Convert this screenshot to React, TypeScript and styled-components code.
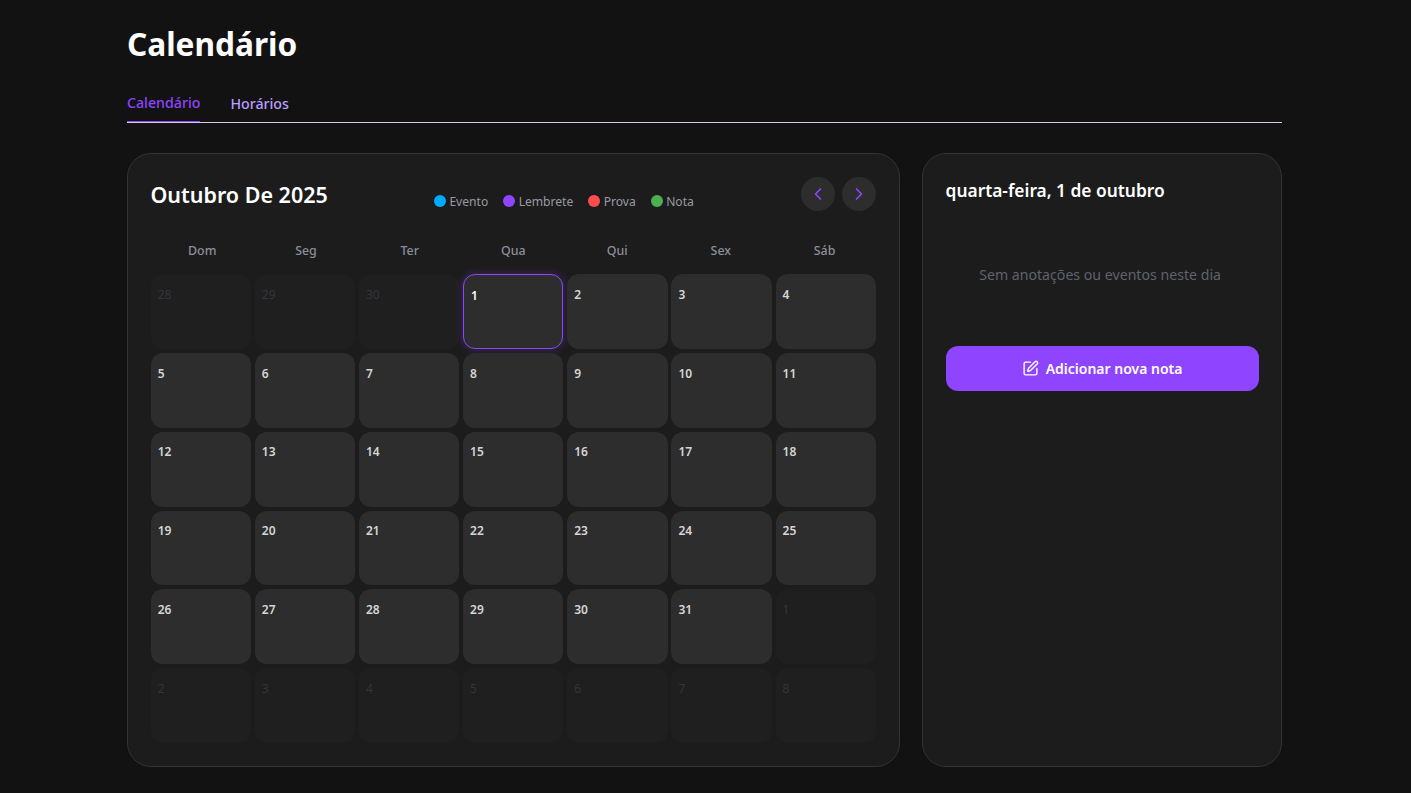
import React from 'react';
import styled, { createGlobalStyle } from 'styled-components';
import { ChevronLeft, ChevronRight, SquarePen } from 'lucide-react';

const Global = createGlobalStyle`
  * { box-sizing: border-box; }
  html, body { margin: 0; background: #121212; height: 100%; }
  body { font-family: "Noto Sans", "Open Sans", sans-serif; overflow: hidden; }
`;

const Page = styled.div`
  width: 1155px;
  margin-left: 127px;
  height: 793px;
  display: flex;
  flex-direction: column;
`;
const Title = styled.h1`
  margin: 0;
  padding-top: 22px;
  height: 89px;
  font-size: 31.6px;
  line-height: 44px;
  font-weight: 700;
  color: #fff;
`;
const Tabs = styled.div`
  display: flex;
  gap: 30px;
  height: 34px;
  border-bottom: 1px solid #d9c8ff;
`;
const Tab = styled.div<{ $active?: boolean }>`
  height: 33px;
  font-size: 14.2px;
  font-weight: 500;
  line-height: ${p => (p.$active ? '27px' : '30px')};
  color: ${p => (p.$active ? '#8f45ff' : '#bb9eff')};
  border-bottom: ${p => (p.$active ? '1px solid #8f45ff' : 'none')};
`;
const Columns = styled.div`
  display: grid;
  grid-template-columns: 772.8px 359.8px;
  gap: 22.4px;
  margin-top: 30px;
  height: 614px;
`;
const Card = styled.section`
  background: #1c1c1c;
  border: 1px solid #333;
  border-radius: 24px;
  padding: 23px 22.4px;
`;
const CalHeader = styled.div`
  display: flex;
  align-items: flex-start;
  height: 62px;
`;
const Month = styled.h2`
  flex: 0 0 283.6px;
  margin: 0;
  font-size: 21.5px;
  line-height: 36px;
  font-weight: 600;
  color: #fff;
`;
const Legend = styled.div`
  display: flex;
  gap: 15px;
  margin-top: 14px;
  height: 20px;
  align-items: center;
`;
const LegendItem = styled.div`
  display: flex;
  align-items: center;
  gap: 3.4px;
  font-size: 12.1px;
  color: #9a9aa4;
`;
const Dot = styled.span<{ $c: string }>`
  width: 12px;
  height: 12px;
  border-radius: 50%;
  background: ${p => p.$c};
`;
const Nav = styled.div`
  display: flex;
  gap: 7px;
  margin-left: auto;
`;
const NavButton = styled.button`
  width: 34px;
  height: 34px;
  border: 0;
  padding: 0;
  border-radius: 50%;
  background: #2d2d2d;
  color: #8f45ff;
  display: flex;
  align-items: center;
  justify-content: center;
`;
const WeekRow = styled.div`
  display: grid;
  grid-template-columns: repeat(7, 1fr);
  gap: 4px;
  height: 24px;
  margin-bottom: 11px;
  padding: 0 2px;
`;
const WeekDay = styled.div`
  text-align: center;
  font-size: 12.4px;
  font-weight: 500;
  line-height: 18px;
  padding-top: 3px;
  color: #8b8f99;
`;
const Grid = styled.div`
  display: grid;
  width: 725.2px;
  margin-left: 0.25px;
  grid-template-columns: repeat(7, 1fr);
  grid-auto-rows: 74.85px;
  gap: 4px 3.85px;
`;
const Cell = styled.div<{ $muted?: boolean; $selected?: boolean }>`
  border-radius: 12px;
  padding: 10.7px 7px;
  font-size: 12px;
  line-height: 20px;
  font-weight: ${p => (p.$muted ? 400 : 600)};
  color: ${p => (p.$muted ? '#33353b' : p.$selected ? '#fff' : '#d6d6d6')};
  background: ${p => (p.$muted ? '#1f1f1f' : '#2d2d2d')};
  border: ${p => (p.$selected ? '1px solid #8f45ff' : 'none')};
  box-shadow: ${p => (p.$selected ? '0 0 10px rgba(143, 69, 255, 0.3)' : 'none')};
`;
const SideTitle = styled.h3`
  margin: 0;
  font-size: 17.35px;
  line-height: 26px;
  font-weight: 600;
  color: #fff;
`;
const Empty = styled.p`
  margin: 61px 0 0;
  height: 82px;
  padding-right: 4px;
  text-align: center;
  font-size: 14.15px;
  line-height: 22px;
  color: #5f636c;
`;
const AddButton = styled.button`
  width: 100%;
  height: 45px;
  border: 0;
  border-radius: 12px;
  background: #8f45ff;
  color: #fff;
  font-family: inherit;
  font-size: 14px;
  font-weight: 600;
  display: flex;
  align-items: center;
  justify-content: center;
  gap: 7px;
`;

const prev = [28, 29, 30];
const days = Array.from({ length: 31 }, (_, i) => i + 1);
const next = [1, 2, 3, 4, 5, 6, 7, 8];
const legend: [string, string][] = [
  ['Evento', '#00aaff'],
  ['Lembrete', '#8f45ff'],
  ['Prova', '#ff4d4d'],
  ['Nota', '#4caf50'],
];

export default function App() {
  return (
    <>
      <Global />
      <Page>
        <Title>Calendário</Title>
        <Tabs>
          <Tab $active>Calendário</Tab>
          <Tab>Horários</Tab>
        </Tabs>
        <Columns>
          <Card>
            <CalHeader>
              <Month>Outubro De 2025</Month>
              <Legend>
                {legend.map(([t, c]) => (
                  <LegendItem key={t}>
                    <Dot $c={c} />
                    {t}
                  </LegendItem>
                ))}
              </Legend>
              <Nav>
                <NavButton aria-label="Anterior"><ChevronLeft size={20} /></NavButton>
                <NavButton aria-label="Próximo"><ChevronRight size={20} /></NavButton>
              </Nav>
            </CalHeader>
            <WeekRow>
              {['Dom', 'Seg', 'Ter', 'Qua', 'Qui', 'Sex', 'Sáb'].map(d => (
                <WeekDay key={d}>{d}</WeekDay>
              ))}
            </WeekRow>
            <Grid>
              {prev.map(d => <Cell key={`p${d}`} $muted>{d}</Cell>)}
              {days.map(d => <Cell key={d} $selected={d === 1}>{d}</Cell>)}
              {next.map(d => <Cell key={`n${d}`} $muted>{d}</Cell>)}
            </Grid>
          </Card>
          <Card>
            <SideTitle>quarta-feira, 1 de outubro</SideTitle>
            <Empty>Sem anotações ou eventos neste dia</Empty>
            <AddButton><SquarePen size={17} />Adicionar nova nota</AddButton>
          </Card>
        </Columns>
      </Page>
    </>
  );
}
